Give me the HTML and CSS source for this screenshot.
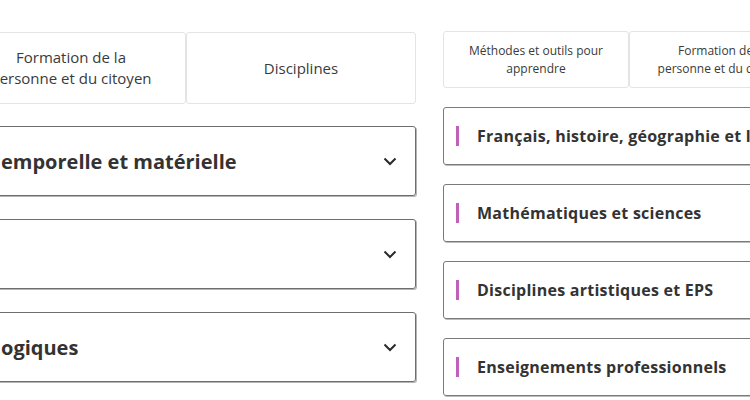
FILE: index.html
```html
<!DOCTYPE html>
<html lang="fr">
<head>
    <meta charset="UTF-8">
    <title>Programmes</title>
    <link rel="stylesheet" href="styles.css">
</head>
<body>
    <div class="stage">
        <section class="panel panel-large">
            <div class="tabs">
                <div class="tab">Formation de la<br>personne et du citoyen</div>
                <div class="tab">Disciplines</div>
            </div>
            <div class="accordion">
                <div class="acc-item">
                    <span class="acc-title">emporelle et matérielle</span>
                    <svg class="chevron" width="14" height="9" viewBox="0 0 14 9"><path d="M1.5 1.5 L7 7 L12.5 1.5" fill="none" stroke="#2a2a2a" stroke-width="2"/></svg>
                </div>
                <div class="acc-item">
                    <span class="acc-title"></span>
                    <svg class="chevron" width="14" height="9" viewBox="0 0 14 9"><path d="M1.5 1.5 L7 7 L12.5 1.5" fill="none" stroke="#2a2a2a" stroke-width="2"/></svg>
                </div>
                <div class="acc-item">
                    <span class="acc-title">ogiques</span>
                    <svg class="chevron" width="14" height="9" viewBox="0 0 14 9"><path d="M1.5 1.5 L7 7 L12.5 1.5" fill="none" stroke="#2a2a2a" stroke-width="2"/></svg>
                </div>
            </div>
        </section>

        <section class="panel panel-small">
            <div class="tabs">
                <div class="tab">Méthodes et outils pour<br>apprendre</div>
                <div class="tab">Formation de la<br>personne et du citoyen</div>
            </div>
            <div class="cards">
                <div class="card"><span class="bar"></span>Français, histoire, géographie et langues</div>
                <div class="card"><span class="bar"></span>Mathématiques et sciences</div>
                <div class="card"><span class="bar"></span>Disciplines artistiques et EPS</div>
                <div class="card"><span class="bar"></span>Enseignements professionnels</div>
            </div>
        </section>
    </div>
</body>
</html>
```

FILE: styles.css
```css
body {
    margin: 0;
    background: #fff;
    font-family: "Open Sans", Arial, sans-serif;
    color: #3a3a3a;
    overflow: hidden;
}
.stage {
    display: flex;
    align-items: flex-start;
    gap: 27px;
    width: 750px;
    height: 400px;
    overflow: hidden;
}
.panel {
    flex: none;
}

/* left column, bigger zoom */
.panel-large {
    width: 460px;
    margin-left: -44px;
    padding-top: 32px;
}
.panel-large .tabs {
    display: grid;
    grid-template-columns: 230px 230px;
}
.tab {
    display: flex;
    align-items: center;
    justify-content: center;
    text-align: center;
    border: 1px solid #e4e4e4;
    border-radius: 3px;
}
.panel-large .tab {
    height: 70px;
    font-size: 15px;
    line-height: 21px;
}
.accordion {
    display: flex;
    flex-direction: column;
    gap: 23px;
    margin-top: 22px;
}
.acc-item {
    display: flex;
    align-items: center;
    justify-content: space-between;
    height: 68px;
    padding: 0 18px 0 44px;
    border: 1px solid #6e6e6e;
    border-radius: 3px;
    box-shadow: 1px 1px 0 #b5b5b5;
}
.acc-title {
    font-size: 20px;
    font-weight: 700;
    color: #333;
}
.chevron {
    display: block;
}

/* right column, smaller zoom */
.panel-small {
    width: 420px;
    padding-top: 31px;
}
.panel-small .tabs {
    display: grid;
    grid-template-columns: 186px 186px;
}
.panel-small .tab {
    height: 55px;
    font-size: 12px;
    line-height: 18px;
}
.cards {
    display: flex;
    flex-direction: column;
    gap: 19px;
    margin-top: 19px;
}
.card {
    display: flex;
    align-items: center;
    height: 56px;
    padding-left: 12px;
    border: 1px solid #7a7a7a;
    border-radius: 3px;
    box-shadow: 1px 1px 0 #bdbdbd;
    font-size: 16px;
    font-weight: 700;
    letter-spacing: 0.25px;
    color: #333;
    white-space: nowrap;
}
.bar {
    width: 3px;
    height: 20px;
    margin-right: 18px;
    background: #c160b9;
    flex: none;
}
```
